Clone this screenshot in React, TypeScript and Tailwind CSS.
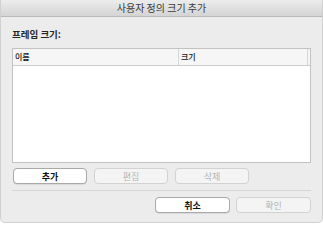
import React from "react";

const font = { fontFamily: '"Noto Sans CJK KR", "Noto Sans", sans-serif' };

function Btn({ label, enabled, className = "" }: { label: string; enabled?: boolean; className?: string }) {
  return (
    <div
      className={
        "h-[16px] rounded-[4px] flex items-center justify-center text-[9px] leading-none " +
        (enabled
          ? "bg-white border border-[#a9a9a9] text-[#111] font-semibold shadow-[0_0.5px_0.5px_rgba(0,0,0,0.15)] "
          : "bg-[#f4f4f4] border border-[#d2d2d2] text-[#b4b4b4] ") +
        className
      }
    >
      {label}
    </div>
  );
}

export default function App() {
  return (
    <div className="w-[323px] h-[225px] bg-white" style={font}>
      <div className="w-[323px] h-[223px] bg-[#ececec] rounded-b-[5px] border-x border-b border-[#d0d0d0] flex flex-col overflow-hidden">
        <div className="h-[17px] shrink-0 bg-gradient-to-b from-[#ececec] to-[#d4d4d4] border-b border-[#b9b9b9] flex items-center justify-center text-[10px] text-[#3a3a3a] leading-none">
          사용자 정의 크기 추가
        </div>
        <div className="px-[11px] flex flex-col">
          <div className="mt-[11px] leading-[12px] text-[9.5px] font-semibold text-[#262626]">프레임 크기:</div>
          <div className="mt-[8px] h-[115px] border border-[#c2c2c2] bg-white flex flex-col">
            <div className="h-[17px] bg-[#f6f6f6] border-b border-[#cdcdcd] flex text-[8px] font-medium text-[#111] leading-none">
              <div className="w-[166px] flex items-center pl-[2px] border-r border-[#d6d6d6]">이름</div>
              <div className="flex-1 flex items-center pl-[2px] border-r border-[#d6d6d6]">크기</div>
              <div className="w-[2px]" />
            </div>
          </div>
          <div className="mt-[5px] flex gap-[7px] pl-[1px]">
            <Btn label="추가" enabled className="w-[74px]" />
            <Btn label="편집" className="w-[74px]" />
            <Btn label="삭제" className="w-[74px]" />
          </div>
          <div className="mt-[6px] h-[1px] bg-[#d6d6d6]" />
          <div className="mt-[6px] flex justify-end gap-[6px]">
            <Btn label="취소" enabled className="w-[75px]" />
            <Btn label="확인" className="w-[75px]" />
          </div>
        </div>
      </div>
    </div>
  );
}
